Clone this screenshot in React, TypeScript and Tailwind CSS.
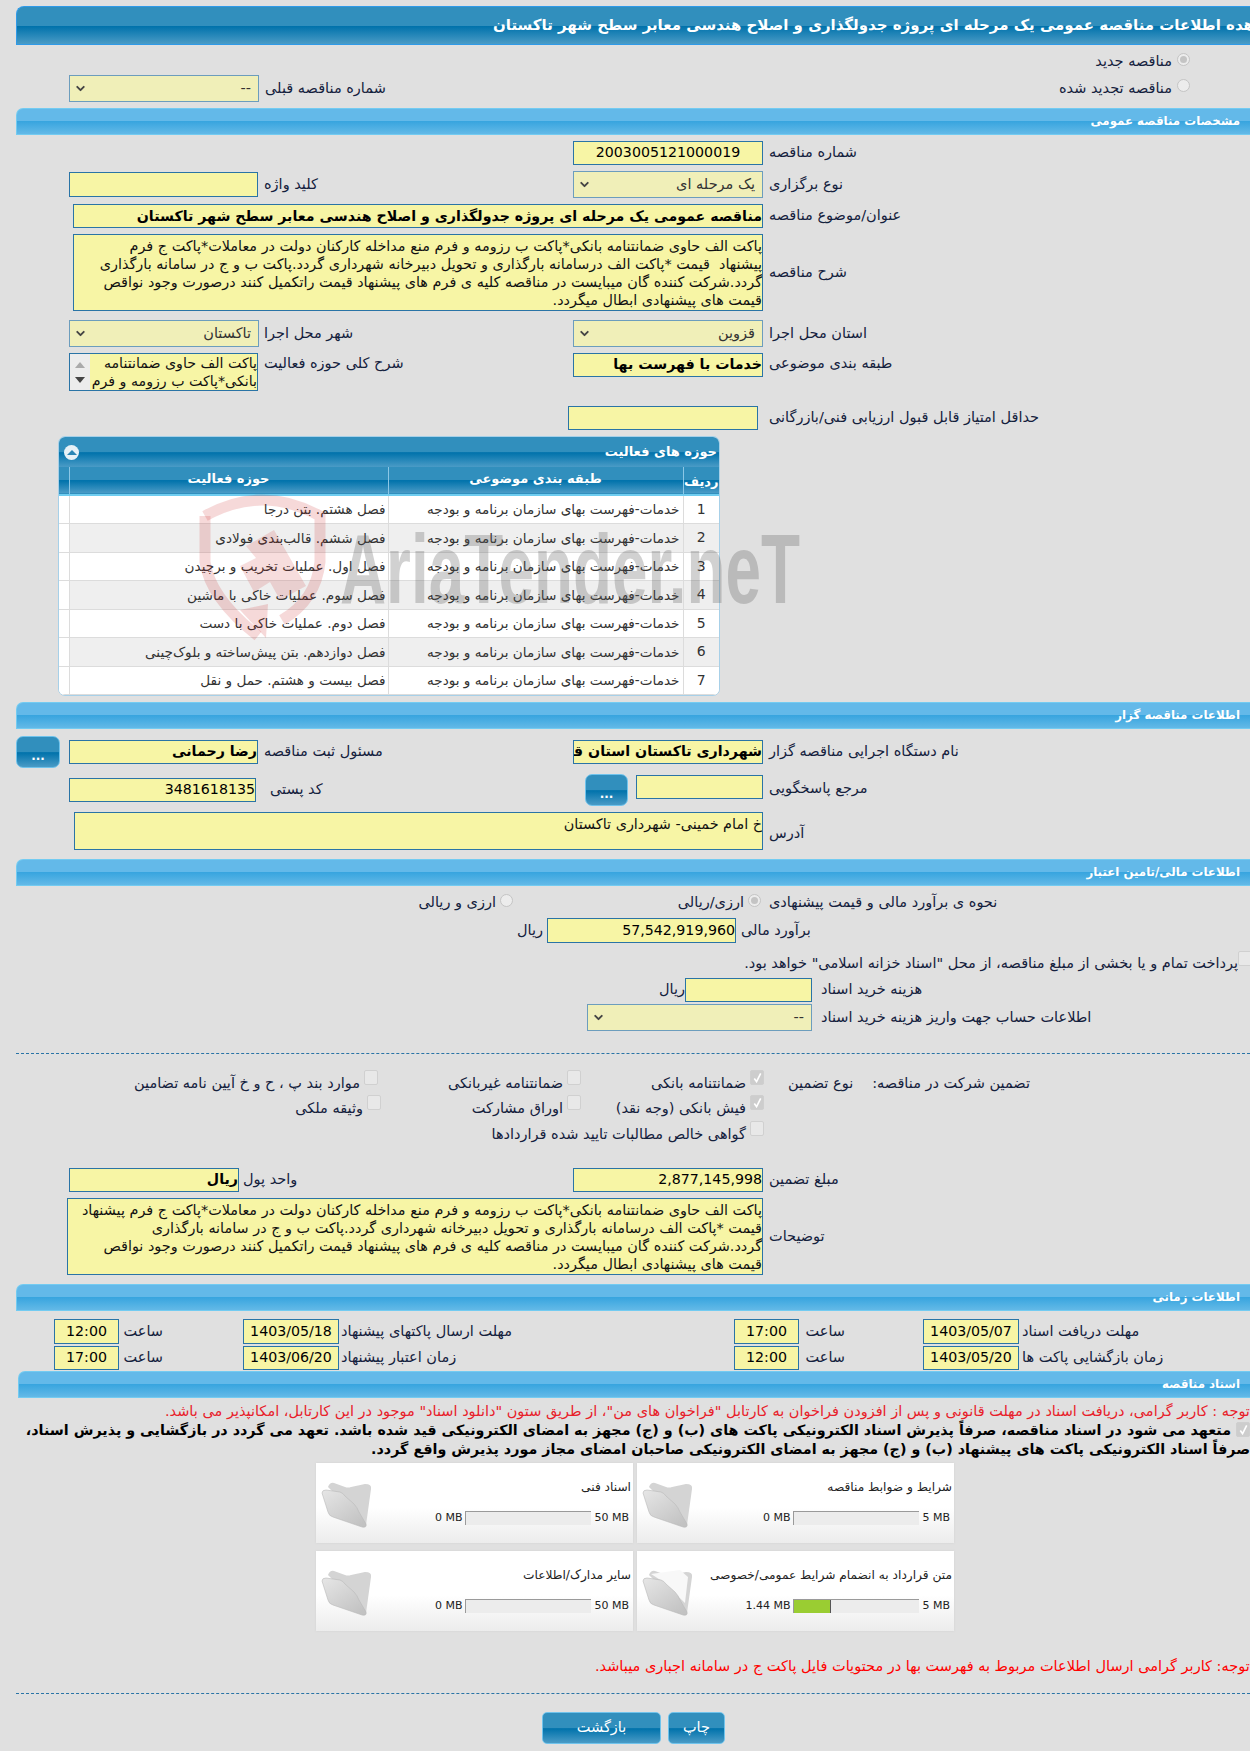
import type { ReactNode } from "react";
import { ChevronDown } from "lucide-react";

const DARK_GRAD = "bg-[linear-gradient(#318fbd_0%,#318fbd_50%,#0072ab_52%,#4a9bc6_100%)]";
const BAR_GRAD = "bg-[linear-gradient(#63b9e9_0%,#63b9e9_48%,#38a5df_50%,#63b9e7_100%)]";

const ROWS = [
  "فصل هشتم. بتن درجا",
  "فصل ششم. قالب‌بندی فولادی",
  "فصل اول. عملیات تخریب و برچیدن",
  "فصل سوم. عملیات خاکی با ماشین",
  "فصل دوم. عملیات خاکی با دست",
  "فصل دوازدهم. بتن پیش‌ساخته و بلوک‌چینی",
  "فصل بیست و هشتم. حمل و نقل",
];

const DESC_1 = [
  "پاکت الف حاوی ضمانتنامه بانکی*پاکت ب رزومه و فرم منع مداخله کارکنان دولت در معاملات*پاکت ج فرم",
  "پیشنهاد  قیمت *پاکت الف درسامانه بارگذاری و تحویل دبیرخانه شهرداری گردد.پاکت ب و ج در سامانه بارگذاری",
  "گردد.شرکت کننده گان میبایست در مناقصه کلیه ی فرم های پیشنهاد قیمت راتکمیل کنند درصورت وجود نواقص",
  "قیمت های پیشنهادی ابطال میگردد.",
];

const DESC_2 = [
  "پاکت الف حاوی ضمانتنامه بانکی*پاکت ب رزومه و فرم منع مداخله کارکنان دولت در معاملات*پاکت ج فرم پیشنهاد",
  "قیمت *پاکت الف درسامانه بارگذاری و تحویل دبیرخانه شهرداری گردد.پاکت ب و ج در سامانه بارگذاری",
  "گردد.شرکت کننده گان میبایست در مناقصه کلیه ی فرم های پیشنهاد قیمت راتکمیل کنند درصورت وجود نواقص",
  "قیمت های پیشنهادی ابطال میگردد.",
];

function Bar({ title, className = "" }: { title: string; className?: string }) {
  return (
    <div
      dir="rtl"
      className={`flex h-[27px] items-center rounded-tl-[7px] border-t border-l border-b border-[#73cbf1] pr-[10px] text-[11.8px] font-bold text-white ${BAR_GRAD} ${className}`}
    >
      {title}
    </div>
  );
}

function Label({ children, className = "" }: { children: ReactNode; className?: string }) {
  return (
    <span dir="rtl" className={`whitespace-nowrap text-[14.5px] text-[#14213d] ${className}`}>
      {children}
    </span>
  );
}

function Input({ value, className = "", bold }: { value?: string; className?: string; bold?: boolean }) {
  return (
    <div
      dir="rtl"
      className={`flex shrink-0 items-center overflow-hidden whitespace-nowrap border border-[#2a74a6] bg-[#f7f5a5] text-[14.2px] text-black ${bold ? "font-bold" : ""} ${className}`}
    >
      {value}
    </div>
  );
}

function SelectBox({ value, className = "" }: { value: string; className?: string }) {
  return (
    <div
      className={`flex h-[27px] shrink-0 items-center justify-between border border-[#6c9dbd] bg-[#f0efb8] pl-[4px] pr-[7px] text-[14.5px] text-[#333] ${className}`}
    >
      <ChevronDown size={13} strokeWidth={3.5} className="text-[#444]" />
      <span dir="rtl">{value}</span>
    </div>
  );
}

function TextBlock({ lines, className = "" }: { lines: string[]; className?: string }) {
  return (
    <div
      dir="rtl"
      className={`shrink-0 overflow-hidden whitespace-pre border border-[#2a74a6] bg-[#f7f5a5] pt-[2px] text-[14.4px] leading-[18px] text-[#111] ${className}`}
    >
      {lines.map((l, i) => (
        <div key={i}>{l}</div>
      ))}
    </div>
  );
}

function Radio({ className = "" }: { className?: string }) {
  return (
    <span
      className={`inline-block size-[13px] shrink-0 rounded-full border border-[#c4c4c4] bg-[#ececec] ${className}`}
    />
  );
}

function RadioOn({ className = "" }: { className?: string }) {
  return (
    <span
      className={`flex size-[13px] shrink-0 items-center justify-center rounded-full border border-[#c4c4c4] bg-[#ececec] ${className}`}
    >
      <span className="size-[7px] rounded-full bg-[#c4c4c4]" />
    </span>
  );
}

function Check({ on, className = "" }: { on?: boolean; className?: string }) {
  return (
    <span
      className={`flex h-[15px] w-[14px] shrink-0 items-center justify-center rounded-[2px] border ${on ? "border-[#cfcfcf] bg-[#cdcdcd]" : "border-[#d0d0d0] bg-[#e8e8e8]"} ${className}`}
    >
      {on && (
        <svg viewBox="0 0 12 12" className="size-[11px]">
          <path d="M2.5 7 L5 10.5 L9.5 1.5" fill="none" stroke="#fff" strokeWidth="1.8" />
        </svg>
      )}
    </span>
  );
}

// one guarantee option: text then box, right edge of the block is the box edge
function Option({ text, on, className = "" }: { text: string; on?: boolean; className?: string }) {
  return (
    <div className={`flex shrink-0 justify-end ${className}`}>
      <Label className="mt-[3px]">{text}</Label>
      <Check on={on} className="ml-[4px]" />
    </div>
  );
}

function DotsButton({ className = "" }: { className?: string }) {
  return (
    <div
      className={`flex h-[32px] shrink-0 items-center justify-center rounded-[7px] border border-[#6fc3ec] pt-[8px] text-[12px] font-bold leading-none text-white ${DARK_GRAD} ${className}`}
    >
      ...
    </div>
  );
}

function Folder({ full }: { full?: boolean }) {
  return (
    <svg viewBox="0 0 52 47" className="h-[47px] w-[52px] shrink-0">
      <defs>
        <linearGradient id="flap" x1="0" y1="0" x2="0.8" y2="1">
          <stop offset="0" stopColor="#e6e6e6" />
          <stop offset="1" stopColor="#c2c2c2" />
        </linearGradient>
      </defs>
      <path d="M7 6 Q9 1 13 2 L24 6 Q27 7 30 6 L44 3 Q51 3 50 8 L45 44 Z" fill="#d4d4d4" />
      {full && <path d="M9 5 L38 1 L46 8 L43 34 L20 12 Z" fill="#f8f8f8" />}
      <path
        d="M1 12 Q1 9 5 9 L19 11 Q22 12 24 15 L33 23 Q36 26 38 31 L45 43 Q46 47 41 46 L12 36 Q8 35 7 31 Z"
        fill="url(#flap)"
        stroke="#b8b8b8"
        strokeWidth="0.6"
      />
    </svg>
  );
}

function FileCard({
  title,
  max,
  used = "0 MB",
  pct = 0,
  full,
}: {
  title: string;
  max: string;
  used?: string;
  pct?: number;
  full?: boolean;
}) {
  return (
    <div className="flex h-[80px] w-[317px] shrink-0 bg-[linear-gradient(#ffffff_0%,#ffffff_55%,#ececec_100%)] pl-[5px] pr-[2px] shadow-[0_0_2px_#d0d0d0]">
      <div className="pt-[18px]">
        <Folder full={full} />
      </div>
      <div className="flex flex-1 flex-col items-end pt-[14px]">
        <span dir="rtl" className="whitespace-nowrap text-[12.2px] leading-[20px] text-[#222]">
          {title}
        </span>
        <div className="mr-[2px] mt-[13px] flex items-center text-[11px] text-[#222]">
          <span className="mr-[3px]">{used}</span>
          <div className="h-[14px] w-[126px] border-t border-l border-[#9a9a9a] bg-[#ececec]">
            <div className="h-full border-r border-[#555] bg-[#9acd32]" style={{ width: `${pct}%`, display: pct ? "block" : "none" }} />
          </div>
          <span className="ml-[3px]">{max}</span>
        </div>
      </div>
    </div>
  );
}

function Watermark() {
  return (
    <svg viewBox="0 0 620 160" className="pointer-events-none absolute left-[190px] top-[490px] h-[160px] w-[620px]">
      <g fill="none" stroke="#c81e1e" strokeOpacity="0.17" strokeWidth="11">
        <path d="M15 26 Q72 -6 130 26 L130 72 Q126 110 92 130" />
        <path d="M15 26 L15 72 Q20 108 68 146" />
      </g>
      <path d="M56 56 L84 40 L116 96 L90 110 L80 92 L64 102 L50 76 L66 68 Z" fill="#c81e1e" fillOpacity="0.15" />
      <path d="M50 120 L78 114 L76 148 Z" fill="#c81e1e" fillOpacity="0.17" />
      <text
        x="150"
        y="113"
        fontFamily="Liberation Sans"
        fontWeight="700"
        fontSize="98"
        fill="#555"
        fillOpacity="0.27"
        textLength="460"
        lengthAdjust="spacingAndGlyphs"
      >
        AriaTender.neT
      </text>
    </svg>
  );
}

function ActivityPanel() {
  return (
    <div className="ml-[42px] mt-[6px] w-[662px] overflow-hidden rounded-[7px] border border-[#a7d0e8] bg-white">
      <div className={`flex h-[30px] items-center justify-between pl-[5px] pr-[2px] ${DARK_GRAD}`}>
        <span className="flex size-[15px] items-center justify-center rounded-full bg-[#e6f1f7]">
          <span className="h-0 w-0 border-x-[5px] border-b-[5px] border-x-transparent border-b-[#2b86b5]" />
        </span>
        <span dir="rtl" className="text-[13px] font-bold text-white">
          حوزه های فعالیت
        </span>
      </div>
      <table dir="rtl" className="w-full table-fixed border-collapse text-[13.6px] text-[#333]">
        <colgroup>
          <col className="w-[36px]" />
          <col className="w-[295px]" />
          <col className="w-[319px]" />
          <col />
        </colgroup>
        <thead>
          <tr className={`h-[28px] border-b-2 border-[#6fcdf0] text-[13px] font-bold text-white ${DARK_GRAD}`}>
            <th className="border-l border-[#8cc7e6] pt-[3px] font-bold">ردیف</th>
            <th className="border-l border-[#8cc7e6] pb-[3px] font-bold">طبقه بندی موضوعی</th>
            <th className="border-l border-[#8cc7e6] pb-[3px] font-bold">حوزه فعالیت</th>
            <th />
          </tr>
        </thead>
        <tbody>
          {ROWS.map((r, i) => (
            <tr key={i} className={`h-[28.5px] border-b border-[#dcdcdc] ${i % 2 ? "bg-[#efefef]" : "bg-white"}`}>
              <td className="border-l border-[#dcdcdc] text-center text-[14px]">{i + 1}</td>
              <td className="whitespace-nowrap border-l border-[#dcdcdc] pr-[3px]">خدمات-فهرست بهای سازمان برنامه و بودجه</td>
              <td className="whitespace-nowrap border-l border-[#dcdcdc] pr-[2px]">{r}</td>
              <td className="bg-white" />
            </tr>
          ))}
        </tbody>
      </table>
    </div>
  );
}

export default function App() {
  return (
    <div className="relative h-[1751px] w-[1250px] overflow-hidden bg-[#e0e0e0] font-['DejaVu_Sans',sans-serif]">
      <div className="pl-4 pt-[6px]">
        <div className={`flex h-[39px] items-center rounded-tl-[8px] border-y border-l border-[#2f9ae8] pl-[476px] ${DARK_GRAD}`}>
          <span dir="rtl" className="whitespace-nowrap text-[15px] font-bold text-white">
            مشاهده اطلاعات مناقصه عمومی یک مرحله ای پروژه جدولگذاری و اصلاح هندسی معابر سطح شهر تاکستان
          </span>
        </div>

        <div className="mt-[7px] flex h-[20px] items-center justify-end pr-[60px]">
          <Label>مناقصه جدید</Label>
          <RadioOn className="mb-[6px] ml-[5px]" />
        </div>
        <div className="mt-[3px] flex h-[27px] items-center pl-[53px] pr-[60px]">
          <SelectBox value="--" className="w-[190px]" />
          <Label className="ml-[6px]">شماره مناقصه قبلی</Label>
          <Label className="ml-auto">مناقصه تجدید شده</Label>
          <Radio className="mb-[6px] ml-[5px]" />
        </div>

        <Bar title="مشخصات مناقصه عمومی" className="mt-[6px]" />

        <div className="mt-[6px] grid h-[24px] grid-cols-[557px_1fr] items-center">
          <div />
          <div className="flex items-center">
            <Input value="2003005121000019" className="h-[24px] w-[190px] justify-center" />
            <Label className="ml-[6px]">شماره مناقصه</Label>
          </div>
        </div>
        <div className="mt-[6px] grid h-[27px] grid-cols-[557px_1fr] items-center">
          <div className="flex items-center pl-[53px]">
            <Input className="h-[25px] w-[189px]" />
            <Label className="ml-[6px]">کلید واژه</Label>
          </div>
          <div className="flex items-center">
            <SelectBox value="یک مرحله ای" className="w-[190px]" />
            <Label className="ml-[6px]">نوع برگزاری</Label>
          </div>
        </div>
        <div className="mt-[6px] flex h-[24px] items-center pl-[57px]">
          <Input value="مناقصه عمومی یک مرحله ای پروژه جدولگذاری و اصلاح هندسی معابر سطح شهر تاکستان" bold className="h-[24px] w-[690px] pt-[2px]" />
          <Label className="ml-[6px]">عنوان/موضوع مناقصه</Label>
        </div>
        <div className="mt-[6px] flex h-[77px] items-center pl-[57px]">
          <TextBlock lines={DESC_1} className="h-[77px] w-[690px]" />
          <Label className="ml-[6px]">شرح مناقصه</Label>
        </div>
        <div className="mt-[9px] grid h-[27px] grid-cols-[557px_1fr] items-center">
          <div className="flex items-center pl-[53px]">
            <SelectBox value="تاکستان" className="w-[190px]" />
            <Label className="ml-[5px]">شهر محل اجرا</Label>
          </div>
          <div className="flex items-center">
            <SelectBox value="قزوین" className="w-[190px]" />
            <Label className="ml-[6px]">استان محل اجرا</Label>
          </div>
        </div>
        <div className="mt-[6px] grid h-[38px] grid-cols-[557px_1fr] items-start">
          <div className="flex items-start pl-[53px]">
            <div className="flex h-[38px] w-[189px] shrink-0 overflow-hidden border border-[#2a74a6] bg-[#f7f5a5]">
              <div className="flex w-[20px] shrink-0 flex-col items-center justify-around bg-[#ececec] py-[3px]">
                <span className="h-0 w-0 border-x-[5px] border-b-[6px] border-x-transparent border-b-[#aaa]" />
                <span className="h-0 w-0 border-x-[5px] border-t-[6px] border-x-transparent border-t-[#444]" />
              </div>
              <div dir="rtl" className="flex-1 overflow-hidden whitespace-nowrap text-[14.2px] leading-[18px] text-[#111]">
                <div>پاکت الف حاوی ضمانتنامه</div>
                <div>بانکی*پاکت ب رزومه و فرم</div>
              </div>
            </div>
            <Label className="ml-[6px]">شرح کلی حوزه فعالیت</Label>
          </div>
          <div className="flex items-start">
            <Input value="خدمات با فهرست بها" bold className="h-[24px] w-[190px]" />
            <Label className="ml-[6px]">طبقه بندی موضوعی</Label>
          </div>
        </div>
        <div className="mt-[15px] flex h-[24px] items-center pl-[552px]">
          <Input className="h-[24px] w-[190px]" />
          <Label className="ml-[11px]">حداقل امتیاز قابل قبول ارزیابی فنی/بازرگانی</Label>
        </div>

        <ActivityPanel />

        <Bar title="اطلاعات مناقصه گزار" className="mt-[6px]" />

        <div className="mt-[7px] grid h-[32px] grid-cols-[557px_1fr] items-center">
          <div className="flex items-center">
            <DotsButton className="w-[44px]" />
            <Input value="رضا رحمانی" bold className="ml-[9px] h-[24px] w-[189px]" />
            <Label className="ml-[6px]">مسئول ثبت مناقصه</Label>
          </div>
          <div className="flex items-center">
            <Input value="شهرداری تاکستان استان قزوین" bold className="h-[24px] w-[190px]" />
            <Label className="ml-[6px]">نام دستگاه اجرایی مناقصه گزار</Label>
          </div>
        </div>
        <div className="mt-[6px] grid h-[32px] grid-cols-[557px_1fr] items-start">
          <div className="flex items-center pl-[53px] pt-[4px]">
            <Input value="3481618135" className="h-[24px] w-[187px]" />
            <Label className="ml-[14px]">کد پستی</Label>
          </div>
          <div className="flex items-start pl-[12px]">
            <DotsButton className="w-[43px]" />
            <Input className="ml-[8px] mt-px h-[24px] w-[127px]" />
            <Label className="ml-[6px] mt-[4px]">مرجع پاسخگویی</Label>
          </div>
        </div>
        <div className="mt-[6px] flex h-[38px] items-center pl-[58px]">
          <TextBlock lines={["خ امام خمینی- شهرداری تاکستان"]} className="h-[38px] w-[689px]" />
          <Label className="ml-[6px] mt-[6px]">آدرس</Label>
        </div>

        <Bar title="اطلاعات مالی/تامین اعتبار" className="mt-[9px]" />

        <div className="mt-[6px] flex h-[22px] items-center">
          <div className="flex w-[497px] shrink-0 items-center justify-end">
            <Label>ارزی و ریالی</Label>
            <Radio className="mb-[6px] ml-[4px]" />
          </div>
          <div className="flex w-[248px] shrink-0 items-center justify-end">
            <Label>ارزی/ریالی</Label>
            <RadioOn className="mb-[6px] ml-[4px]" />
          </div>
          <Label className="ml-[8px]">نحوه ی برآورد مالی و قیمت پیشنهادی</Label>
        </div>
        <div className="mt-[4px] flex h-[25px] items-center">
          <div className="flex w-[531px] shrink-0 justify-end pr-[4px]">
            <Label>ریال</Label>
          </div>
          <Input value="57,542,919,960" className="h-[25px] w-[189px]" />
          <Label className="ml-[5px]">برآورد مالی</Label>
        </div>
        <div className="mt-[8px] flex h-[20px] items-start justify-end">
          <Label className="mt-[2px]">پرداخت تمام و یا بخشی از مبلغ مناقصه، از محل "اسناد خزانه اسلامی" خواهد بود.</Label>
          <Check className="-mr-[2px]" />
        </div>
        <div className="mt-[7px] flex h-[24px] items-center">
          <div className="flex w-[669px] shrink-0 justify-end">
            <Label>ریال</Label>
          </div>
          <Input className="h-[24px] w-[127px]" />
          <Label className="ml-[9px]">هزینه خرید اسناد</Label>
        </div>
        <div className="mt-[2px] flex h-[27px] items-center pl-[571px]">
          <SelectBox value="--" className="w-[225px]" />
          <Label className="ml-[9px]">اطلاعات حساب جهت واریز هزینه خرید اسناد</Label>
        </div>

        <div className="mt-[22px] border-t border-dashed border-[#2a74a6]" />

        <div className="mt-[16px] flex h-[24px] items-start">
          <Option text="موارد بند پ ، ح و خ آیین نامه تضامین" className="w-[362px]" />
          <Option text="ضمانتنامه غیربانکی" className="w-[203px]" />
          <Option text="ضمانتنامه بانکی" on className="w-[183px]" />
          <Label className="ml-[24px] mt-[3px]">نوع تضمین</Label>
          <Label className="ml-[19px] mt-[3px]">تضمین شرکت در مناقصه:</Label>
        </div>
        <div className="mt-px flex h-[24px] items-start">
          <Option text="وثیقه ملکی" className="w-[365px]" />
          <Option text="اوراق مشارکت" className="w-[200px]" />
          <Option text="فیش بانکی (وجه نقد)" on className="w-[183px]" />
        </div>
        <div className="mt-[2px] flex h-[24px] items-start">
          <Option text="گواهی خالص مطالبات تایید شده قراردادها" className="w-[748px]" />
        </div>

        <div className="mt-[23px] grid h-[24px] grid-cols-[557px_1fr] items-center">
          <div className="flex items-center pl-[53px]">
            <Input value="ریال" bold className="h-[24px] w-[170px]" />
            <Label className="ml-[4px]">واحد پول</Label>
          </div>
          <div className="flex items-center">
            <Input value="2,877,145,998" className="h-[24px] w-[190px]" />
            <Label className="ml-[6px]">مبلغ تضمین</Label>
          </div>
        </div>
        <div className="mt-[6px] flex h-[77px] items-center pl-[51px]">
          <TextBlock lines={DESC_2} className="h-[77px] w-[696px]" />
          <Label className="ml-[6px]">توضیحات</Label>
        </div>

        <Bar title="اطلاعات زمانی" className="mt-[9px]" />

        <div className="mt-[8px] flex h-[25px] items-center pl-[38px]">
          <Input value="12:00" className="h-[25px] w-[65px] justify-center" />
          <Label className="ml-[2px] w-[42px]">ساعت</Label>
          <Input value="1403/05/18" className="ml-[80px] h-[25px] w-[96px] justify-center" />
          <Label className="ml-[2px] w-[393px] text-left">مهلت ارسال پاکتهای پیشنهاد</Label>
          <Input value="17:00" className="h-[25px] w-[65px] justify-center" />
          <Label className="ml-[2px] w-[44px]">ساعت</Label>
          <Input value="1403/05/07" className="ml-[78px] h-[25px] w-[96px] justify-center" />
          <Label className="ml-[3px]">مهلت دریافت اسناد</Label>
        </div>
        <div className="mt-[2px] flex h-[24px] items-center pl-[38px]">
          <Input value="17:00" className="h-[24px] w-[65px] justify-center" />
          <Label className="ml-[2px] w-[42px]">ساعت</Label>
          <Input value="1403/06/20" className="ml-[80px] h-[24px] w-[96px] justify-center" />
          <Label className="ml-[2px] w-[393px] text-left">زمان اعتبار پیشنهاد</Label>
          <Input value="12:00" className="h-[24px] w-[65px] justify-center" />
          <Label className="ml-[2px] w-[44px]">ساعت</Label>
          <Input value="1403/05/20" className="ml-[78px] h-[24px] w-[96px] justify-center" />
          <Label className="ml-[3px]">زمان بازگشایی پاکت ها</Label>
        </div>

        <Bar title="اسناد مناقصه" className="ml-[2px] mt-px" />

        <div className="mt-[4px] h-[18px] whitespace-nowrap pl-[149px] text-[14.5px] leading-[18px] text-[#e8202a]">
          <span dir="rtl">
            توجه : کاربر گرامی، دریافت اسناد در مهلت قانونی و پس از افزودن فراخوان به کارتابل "فراخوان های من"، از طریق ستون "دانلود اسناد" موجود در این کارتابل، امکانپذیر می باشد.
          </span>
        </div>
        <div className="mt-px flex h-[19px] items-start justify-end">
          <span dir="rtl" className="whitespace-nowrap text-[14.3px] font-bold leading-[19px] text-black">
            متعهد می شود در اسناد مناقصه، صرفاً پذیرش اسناد الکترونیکی پاکت های (ب) و (ج) مجهز به امضای الکترونیکی قید شده باشد. تعهد می گردد در بازگشایی و پذیرش اسناد،
          </span>
          <Check on className="ml-[5px] mt-px" />
        </div>
        <div dir="rtl" className="h-[18px] whitespace-nowrap text-[14.3px] font-bold leading-[18px] text-black">
          صرفاً اسناد الکترونیکی پاکت های پیشنهاد (ب) و (ج) مجهز به امضای الکترونیکی صاحبان امضای مجاز مورد پذیرش واقع گردد.
        </div>

        <div className="ml-[300px] mt-[5px] flex gap-[4px]">
          <FileCard title="اسناد فنی" max="50 MB" />
          <FileCard title="شرایط و ضوابط مناقصه" max="5 MB" />
        </div>
        <div className="ml-[300px] mt-[8px] flex gap-[4px]">
          <FileCard title="سایر مدارک/اطلاعات" max="50 MB" />
          <FileCard title="متن قرارداد به انضمام شرایط عمومی/خصوصی" max="5 MB" used="1.44 MB" pct={29} full />
        </div>

        <div className="mt-[26px] h-[18px] whitespace-nowrap pl-[579px] text-[14.5px] leading-[18px] text-[#f00]">
          <span dir="rtl">توجه: کاربر گرامی ارسال اطلاعات مربوط به فهرست بها در محتویات فایل پاکت ج در سامانه اجباری میباشد.</span>
        </div>

        <div className="mt-[18px] border-t border-dashed border-[#2a74a6]" />

        <div className="ml-[526px] mt-[18px] flex gap-[7px]">
          <div className={`flex h-[32px] w-[119px] items-center justify-center rounded-[5px] border border-[#6fc3ec] text-[14.5px] text-white ${DARK_GRAD}`}>
            بازگشت
          </div>
          <div className={`flex h-[32px] w-[57px] items-center justify-center rounded-[5px] border border-[#6fc3ec] text-[14.5px] text-white ${DARK_GRAD}`}>
            چاپ
          </div>
        </div>
      </div>
      <Watermark />
    </div>
  );
}
